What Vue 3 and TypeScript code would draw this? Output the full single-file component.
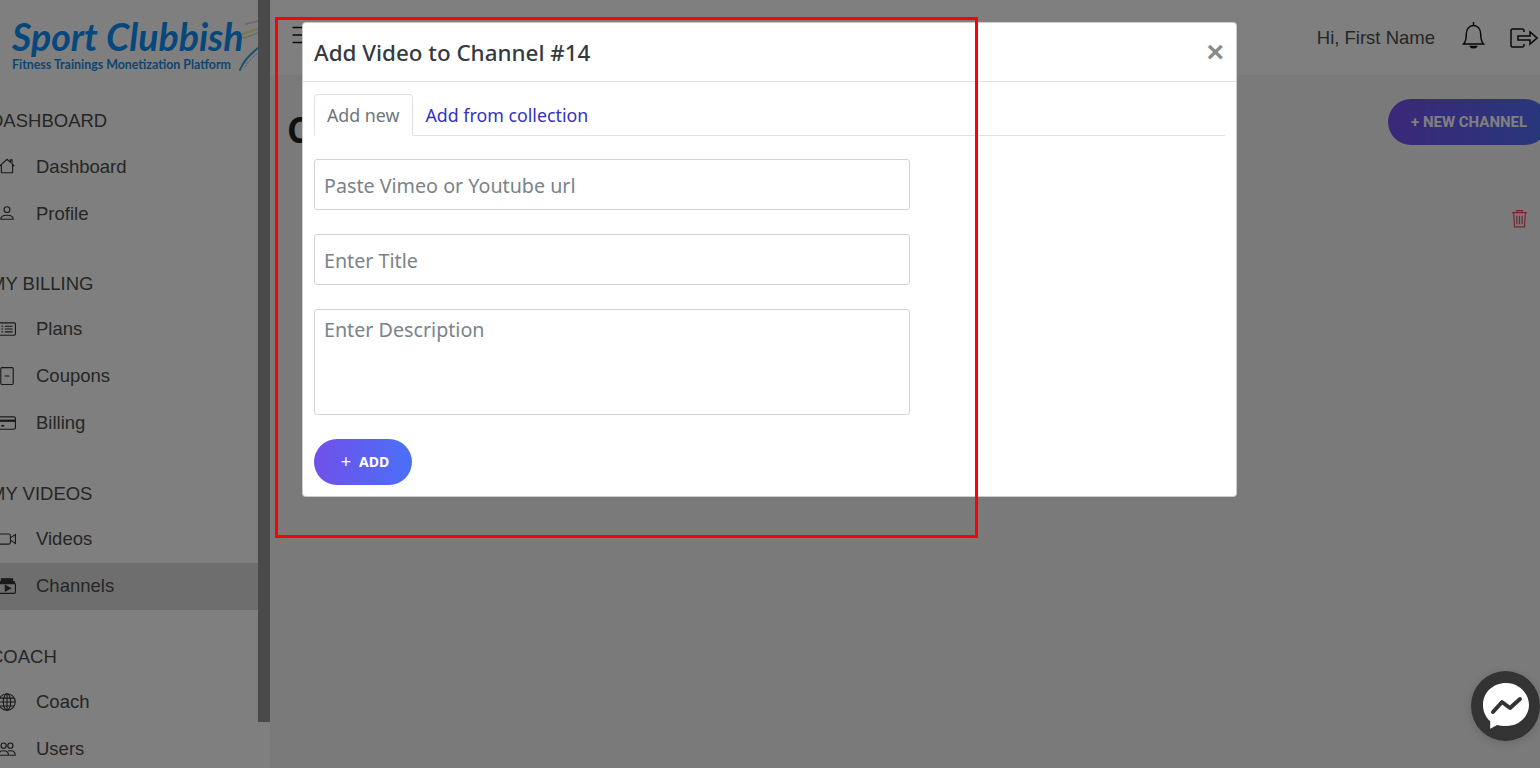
<script setup lang="ts">
interface NavItem { label: string; icon: string; active?: boolean }
interface NavSection { title: string; items: NavItem[] }

const sections: NavSection[] = [
  { title: 'DASHBOARD', items: [{ label: 'Dashboard', icon: 'home' }, { label: 'Profile', icon: 'user' }] },
  { title: 'MY BILLING', items: [{ label: 'Plans', icon: 'list' }, { label: 'Coupons', icon: 'coupon' }, { label: 'Billing', icon: 'card' }] },
  { title: 'MY VIDEOS', items: [{ label: 'Videos', icon: 'video' }, { label: 'Channels', icon: 'channel', active: true }] },
  { title: 'COACH', items: [{ label: 'Coach', icon: 'globe' }, { label: 'Users', icon: 'users' }] }
]
</script>

<template>
  <div class="page">
    <aside class="sidebar">
      <div class="side-inner">
        <div class="logo">
          <div class="logo-name">Sport Clubbish</div>
          <div class="logo-sub">Fitness Trainings Monetization Platform</div>
          <svg class="logo-splash" viewBox="0 0 24 54" width="24" height="54" fill="none" stroke-linecap="round">
            <path d="M10 4 L22 1" stroke="#f0a0c0" stroke-width="1.500" opacity=".7" />
            <path d="M6 14 L22 9" stroke="#f6e88a" stroke-width="2" opacity=".8" />
            <path d="M8 18 L22 13" stroke="#b8e090" stroke-width="1.500" opacity=".8" />
            <path d="M4 50 C7 42 13 35 22 28" stroke="#3f9fd0" stroke-width="2" />
            <path d="M9 47 C12 42 16 37 21 34" stroke="#7cc4e8" stroke-width="1" stroke-dasharray="2 2" />
          </svg>
        </div>
        <section v-for="s in sections" :key="s.title" class="nav-section">
          <h6 class="nav-title">{{ s.title }}</h6>
          <a v-for="i in s.items" :key="i.label" class="nav-item" :class="{ active: i.active }">
            <svg class="nav-icon" viewBox="0 0 16 16" width="18" height="18" fill="none" stroke="#333" stroke-width="1">
              <template v-if="i.icon === 'home'">
                <path d="M1.500 8 8 2l3 2.700V2.600h1.500v3.600L14.500 8M3 7v7h10V7" />
              </template>
              <template v-else-if="i.icon === 'user'">
                <circle cx="8" cy="5" r="2.600" />
                <path d="M2.500 13.500c0-2.600 2.500-3.500 5.500-3.500s5.500.9 5.500 3.500z" />
              </template>
              <template v-else-if="i.icon === 'list'">
                <rect x="0.500" y="2.500" width="15" height="11" rx="1" />
                <path d="M6 5.500h7M6 8h7M6 10.500h7M3 5.500h1.500M3 8h1.500M3 10.500h1.500" />
              </template>
              <template v-else-if="i.icon === 'coupon'">
                <rect x="2.500" y="0.500" width="11" height="15" rx="1" />
                <path d="M6 8h4" />
              </template>
              <template v-else-if="i.icon === 'card'">
                <rect x="0.500" y="2.500" width="15" height="11" rx="1.500" />
                <path d="M.5 6h15" stroke-width="2" />
                <path d="M3 10.500h2.500" stroke-width="1.500" />
              </template>
              <template v-else-if="i.icon === 'video'">
                <rect x="0.500" y="3.500" width="10.500" height="9" rx="1.500" />
                <path d="M11 7l4.500-3v8L11 9" />
              </template>
              <template v-else-if="i.icon === 'channel'">
                <path d="M3 1.500h10v2H3z" fill="#333" />
                <path d="M1.500 4h13v2h-13z" fill="#333" />
                <rect x="0.500" y="5.500" width="15" height="9" rx="1" />
                <path d="M6.500 7.500v5l4.500-2.500z" fill="#333" />
              </template>
              <template v-else-if="i.icon === 'globe'">
                <circle cx="8" cy="8" r="7.300" />
                <ellipse cx="8" cy="8" rx="3.300" ry="7.300" />
                <path d="M8 .7v14.600M.7 8h14.600M1.800 4.500h12.400M1.800 11.500h12.400" />
              </template>
              <template v-else>
                <circle cx="5" cy="5" r="2.300" />
                <circle cx="11" cy="5" r="2.300" />
                <path d="M.7 13.500c0-2.800 1.800-4 4.300-4s4.300 1.200 4.300 4zM9 9.700c.6-.2 1.300-.2 2-.2 2.500 0 4.300 1.200 4.300 4H10" />
              </template>
            </svg>
            <span>{{ i.label }}</span>
          </a>
        </section>
      </div>
      <div class="scroll-thumb"></div>
    </aside>

    <div class="main">
      <header class="topbar">
        <svg class="burger" viewBox="0 0 16 16" width="20" height="20" fill="none" stroke="#111" stroke-width="1.200">
          <path d="M2 2h12M2 8h12M2 14h12" />
        </svg>
        <div class="top-right">
          <span class="greeting">Hi, First Name</span>
          <svg class="bell" viewBox="0 0 23 28" width="23" height="28" fill="none" stroke="#111" stroke-width="1.500">
            <path d="M1.500 23c2-2 2.800-4 2.800-10 0-5 3-8.500 7.200-8.500s7.200 3.500 7.200 8.500c0 6 .8 8 2.800 10z" />
            <path d="M11.500 1v3.500" />
            <path d="M8.500 25.500c1 1.700 5 1.700 6 0z" fill="#111" />
          </svg>
          <svg class="logout" viewBox="0 0 28 20" width="28" height="20" fill="none" stroke="#111" stroke-width="1.500">
            <path d="M14 4V2.500A1.500 1.500 0 0 0 12.500 1h-10A1.500 1.500 0 0 0 1 2.500v15A1.500 1.500 0 0 0 2.500 19h10a1.500 1.500 0 0 0 1.500-1.500V16" />
            <path d="M8 8h12V4l7 6-7 6v-4H8z" />
          </svg>
        </div>
      </header>
      <div class="content">
        <div class="content-head">
          <h1>Channels</h1>
          <button class="new-channel">+ NEW CHANNEL</button>
        </div>
        <div class="trash-row">
          <svg viewBox="0 0 16 18" width="17" height="19" fill="none" stroke="#e8485e" stroke-width="1.100">
            <path d="M1 3.500h14M5.500 3.500V1.500h5v2M2.500 3.500l.8 13.500h9.400l.8-13.500M5.500 6.500v8M8 6.500v8M10.500 6.500v8" />
          </svg>
        </div>
      </div>
    </div>

    <div class="backdrop"></div>

    <div class="modal">
      <div class="modal-head">
        <h5>Add Video to Channel #14</h5>
        <span class="close">×</span>
      </div>
      <div class="modal-body">
        <div class="tabs">
          <a class="tab current">Add new</a>
          <a class="tab">Add from collection</a>
        </div>
        <input class="field" placeholder="Paste Vimeo or Youtube url" />
        <input class="field" placeholder="Enter Title" />
        <textarea class="field area" placeholder="Enter Description"></textarea>
        <button class="add-btn"><span class="plus">+</span>ADD</button>
      </div>
    </div>

    <div class="annotation"></div>

    <div class="messenger">
      <svg viewBox="0 0 48 48" width="48" height="48">
        <path d="M24 1C11 1 1 10.500 1 23c0 6.600 2.700 12.300 7.200 16.200v7.600l7-3.900c2.800.8 5.700 1.100 8.800 1.100 13 0 23-9.500 23-21S37 1 24 1z" fill="#fff" />
        <path d="M11 30 L20 20 L28 26 L38 17" fill="none" stroke="#333" stroke-width="4" stroke-linejoin="round" stroke-linecap="round" />
      </svg>
    </div>
  </div>
</template>

<style scoped>
.page {
  position: relative;
  display: flex;
  width: 1540px;
  height: 768px;
  overflow: hidden;
  background: #f5f5f5;
  font-family: "Liberation Sans", Arial, sans-serif;
  color: #4c4c4c;
}
.sidebar {
  display: flex;
  flex: 0 0 270px;
  height: 768px;
  background: #fff;
  overflow: hidden;
}
.side-inner {
  width: 258px;
  flex: none;
  overflow: hidden;
}
.scroll-thumb {
  width: 12px;
  height: 722px;
  background: #949494;
}
.logo {
  position: relative;
  height: 97px;
  padding: 16px 0 0 12px;
  box-sizing: border-box;
}
.logo-name {
  font-family: Lato, sans-serif;
  font-weight: 700;
  font-style: italic;
  font-size: 37.500px;
  line-height: 41px;
  color: #0c90f8;
  white-space: nowrap;
}
.logo-sub {
  font-family: Lato, sans-serif;
  font-weight: 700;
  font-size: 12.400px;
  line-height: 15px;
  color: #1a8ce8;
  white-space: nowrap;
}
.logo-splash {
  position: absolute;
  left: 236px;
  top: 20px;
}
.nav-section {
  margin-bottom: 23px;
}
.nav-title {
  margin: 0 0 0 -10px;
  height: 46px;
  box-sizing: border-box;
  padding-top: 1px;
  font-size: 18.500px;
  font-weight: 400;
  line-height: 46px;
  white-space: nowrap;
}
.nav-item {
  display: flex;
  align-items: center;
  height: 47px;
  padding-left: 36px;
  font-size: 18.500px;
  position: relative;
}
.nav-section + .nav-section .nav-item span {
  padding-bottom: 2px;
}
.nav-item.active {
  background: #ddd;
}
.nav-icon {
  position: absolute;
  left: -2px;
  top: 14px;
}
.main {
  flex: 1;
  min-width: 0;
  display: flex;
  flex-direction: column;
}
.topbar {
  height: 75px;
  background: #fff;
  display: flex;
  align-items: center;
  justify-content: space-between;
  padding: 0 0 0 20px;
}
.burger {
  margin-bottom: 6px;
}
.top-right {
  display: flex;
  align-items: center;
  gap: 25px;
}
.greeting {
  font-size: 18.500px;
  margin-right: 2px;
}
.bell {
  margin-bottom: 5px;
}
.logout {
  margin-right: 2px;
}
.content {
  flex: 1;
  padding: 24px 0 0 18px;
}
.content-head {
  display: flex;
  justify-content: space-between;
  align-items: flex-start;
}
.content-head h1 {
  margin: 7px 0 0 -1px;
  font-family: "Open Sans", sans-serif;
  font-size: 35px;
  font-weight: 700;
  color: #222;
}
.new-channel {
  width: 160px;
  height: 46px;
  margin: 0 -8px 0 0;
  border: 0;
  border-radius: 23px;
  background: linear-gradient(90deg, #7650f0, #4f70f8);
  color: #fff;
  font-family: Roboto, sans-serif;
  font-size: 15px;
  font-weight: 700;
  text-align: left;
  padding: 0 0 0 23px;
  white-space: nowrap;
}
.trash-row {
  display: flex;
  justify-content: flex-end;
  padding: 56px 12px 0 0;
}
.backdrop {
  position: absolute;
  inset: 0;
  background: rgba(0, 0, 0, 0.5);
}
.modal {
  position: absolute;
  left: 302px;
  top: 22px;
  width: 935px;
  height: 475px;
  box-sizing: border-box;
  background: #fff;
  border: 1px solid rgba(0, 0, 0, 0.2);
  border-radius: 4px;
  font-family: "Noto Sans", sans-serif;
}
.modal-head {
  display: flex;
  align-items: center;
  justify-content: space-between;
  height: 59px;
  box-sizing: border-box;
  padding: 0 13px 0 11px;
  border-bottom: 1px solid #dee2e6;
}
.modal-head h5 {
  margin: 0;
  font-size: 22.400px;
  font-weight: 500;
  color: #343a40;
}
.close {
  font-family: "Liberation Sans", sans-serif;
  font-size: 30px;
  font-weight: 700;
  line-height: 1;
  color: #8a8a8a;
  margin: -1px -1px 0 0;
}
.modal-body {
  display: flex;
  flex-direction: column;
  align-items: flex-start;
  padding: 12px 11px;
}
.tabs {
  display: flex;
  width: 100%;
  height: 42px;
  box-sizing: border-box;
  margin-bottom: 23px;
  border-bottom: 1px solid #dee2e6;
}
.tab {
  height: 42px;
  box-sizing: border-box;
  padding: 0 12px;
  font-size: 17.800px;
  line-height: 41px;
  color: #3630c0;
  border: 1px solid transparent;
  white-space: nowrap;
}
.tab.current {
  color: #6c757d;
  background: #fff;
  border-color: #dee2e6 #dee2e6 #fff;
  border-radius: 4px 4px 0 0;
}
.field {
  display: block;
  width: 596px;
  height: 51px;
  box-sizing: border-box;
  margin-bottom: 24px;
  padding: 1px 9px 0;
  border: 1px solid #ced4da;
  border-radius: 3px;
  background: #fff;
  font-family: "Noto Sans", sans-serif;
  font-size: 19.700px;
  color: #495057;
  outline: none;
}
.field::placeholder {
  color: #7b838a;
  opacity: 1;
}
.area {
  height: 106px;
  padding-top: 6px;
  resize: none;
}
.add-btn {
  display: flex;
  align-items: center;
  justify-content: center;
  width: 98px;
  height: 46px;
  padding: 0 0 2px 4px;
  border: 0;
  border-radius: 23px;
  background: linear-gradient(90deg, #7050e8, #4a70f8);
  color: #fff;
  font-family: "Noto Sans", sans-serif;
  font-size: 14px;
  font-weight: 700;
}
.plus {
  margin-right: 8px;
  font-weight: 400;
  font-size: 18px;
}
.annotation {
  position: absolute;
  left: 275px;
  top: 17px;
  width: 703px;
  height: 521px;
  box-sizing: border-box;
  border: 3px solid #ff0000;
}
.messenger {
  position: absolute;
  left: 1471px;
  top: 671px;
  width: 69px;
  height: 70px;
  border-radius: 50%;
  background: #333;
  display: flex;
  align-items: center;
  justify-content: center;
  box-shadow: 0 2px 10px rgba(0, 0, 0, 0.15);
}
</style>
